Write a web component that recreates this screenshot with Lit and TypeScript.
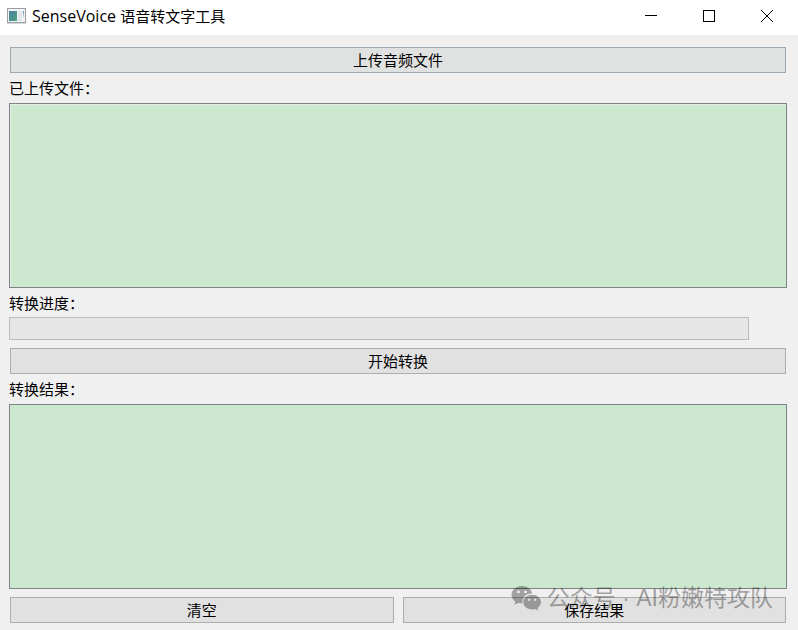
import { LitElement, html, css } from "lit";
import { customElement, property } from "lit/decorators.js";

@customElement("title-bar")
class TitleBar extends LitElement {
  @property() product = "";
  @property() caption = "";

  static styles = css`
    :host {
      display: flex;
      align-items: center;
      height: 35px;
      padding-left: 7px;
      background: #fff;
      color: #000;
    }
    .app-icon {
      flex: none;
      width: 19px;
      height: 16px;
      margin-bottom: 3px;
    }
    .heading {
      flex: 1;
      margin: 0 0 4px 6px;
      font: 400 16px/20px "Open Sans", "Noto Sans CJK SC", sans-serif;
      white-space: nowrap;
    }
    .caption {
      font-size: 15px;
    }
    .controls {
      display: flex;
      align-self: flex-start;
      margin-right: 2px;
    }
    .control {
      width: 58px;
      height: 32px;
      padding: 0;
      border: 0;
      background: none;
      display: grid;
      place-items: center;
    }
    .control:hover {
      background: #e5e5e5;
    }
    .glyph {
      width: 12px;
      height: 12px;
      overflow: visible;
      fill: none;
      stroke: #000;
    }
  `;

  render() {
    return html`
      <svg class="app-icon" viewBox="0 0 19 16" aria-hidden="true">
        <defs>
          <linearGradient id="pane" x1="0" y1="0" x2="1" y2="1">
            <stop offset="0" stop-color="#4a7fa8" />
            <stop offset="1" stop-color="#4fa57c" />
          </linearGradient>
          <linearGradient id="side" x1="0" y1="0" x2="0" y2="1">
            <stop offset="0" stop-color="#4a8fb0" />
            <stop offset="1" stop-color="#dfe8e6" />
          </linearGradient>
        </defs>
        <rect x=".5" y=".5" width="18" height="14" fill="#f1f3f4" stroke="#9a9fa6" />
        <path d="M0 15.5h19" stroke="#d5d7da" />
        <rect x="2" y="3" width="8" height="10" fill="url(#pane)" />
        <rect x="11" y="3" width="4" height="10" fill="#e3e7ea" />
        <rect x="16" y="3" width="1" height="7" fill="url(#side)" />
      </svg>
      <div class="heading">${this.product} <span class="caption">${this.caption}</span></div>
      <div class="controls">
        <button class="control" aria-label="最小化">
          <svg class="glyph" viewBox="0 0 12 12"><path d="M0 5.5h12" /></svg>
        </button>
        <button class="control" aria-label="最大化">
          <svg class="glyph" viewBox="0 0 12 12"><rect x=".5" y=".5" width="11" height="11" /></svg>
        </button>
        <button class="control" aria-label="关闭">
          <svg class="glyph" viewBox="0 0 12 12"><path d="M0 0l12 12M12 0l-12 12" /></svg>
        </button>
      </div>
    `;
  }
}

@customElement("account-mark")
class AccountMark extends LitElement {
  static styles = css`
    :host {
      display: flex;
      align-items: center;
      gap: 5px;
      opacity: 0.32;
      color: #000;
      font: 400 23px/32px "Liberation Sans", "Noto Sans CJK SC", sans-serif;
      white-space: nowrap;
      pointer-events: none;
    }
    .logo {
      width: 31px;
      height: 26px;
    }
  `;

  render() {
    return html`
      <svg class="logo" viewBox="0 0 31 26" aria-hidden="true">
        <path
          fill="currentColor"
          fill-rule="evenodd"
          d="M11 1C5 1 .5 4.800.5 9.700c0 2.800 1.500 5.200 3.900 6.800L3.400 19.700l3.800-2c1.300.4 2.500.6 4.200.6C10.600 12.500 15 8.500 21.200 8.500 20.500 4 16.200 1 11 1zM7.500 5.500a1.400 1.400 0 1 1 0 2.800 1.400 1.400 0 0 1 0-2.800zm7 0a1.400 1.400 0 1 1 0 2.800 1.400 1.400 0 0 1 0-2.800z"
        />
        <path
          fill="currentColor"
          fill-rule="evenodd"
          d="M21.200 9.700c-5 0-9 3.300-9 7.400s4 7.400 9 7.400c1.100 0 2.100-.1 3.100-.4l3 1.700-.8-2.900c2-1.400 3.500-3.500 3.500-5.800 0-4.100-4-7.400-8.800-7.400zm-3 3.900a1.200 1.200 0 1 1 0 2.400 1.200 1.200 0 0 1 0-2.400zm6 0a1.200 1.200 0 1 1 0 2.400 1.200 1.200 0 0 1 0-2.400z"
        />
      </svg>
      <span>公众号 · AI粉嫩特攻队</span>
    `;
  }
}

@customElement("app-root")
class AppRoot extends LitElement {
  static styles = css`
    :host {
      position: relative;
      display: flex;
      flex-direction: column;
      min-height: 100vh;
      background: #f0f0f0;
      color: #000;
      font: 400 15px/20px "Noto Sans CJK SC", sans-serif;
    }
    .panel {
      flex: 1;
      display: flex;
      flex-direction: column;
      padding: 12px 11px 7px 9px;
    }
    .button {
      flex: 1;
      height: 26px;
      padding: 0;
      border: 1px solid #adadad;
      border-radius: 0;
      background: #e1e1e1;
      color: #000;
      font: inherit;
      line-height: 22px;
    }
    .button.focused {
      border-color: #9fa9b4;
      background: #e0e2e1;
    }
    .row {
      display: flex;
      gap: 9px;
      margin: 0 1px;
    }
    .label {
      line-height: 30px;
    }
    .label.compact {
      line-height: 29px;
    }
    .box {
      flex: 1;
      min-height: 60px;
      box-sizing: border-box;
      margin: 0;
      padding: 4px;
      border: 1px solid #7f8385;
      border-radius: 0;
      outline: 0;
      resize: none;
      background: #cce8cf;
      color: #000;
      font: inherit;
    }
    .box.files {
      box-shadow: inset 1px 1px #e6ece8;
    }
    .progress {
      appearance: none;
      display: block;
      box-sizing: border-box;
      width: calc(100% - 38px);
      height: 23px;
      margin-bottom: 8px;
      border: 1px solid #bcbcbc;
      background: #e6e6e6;
    }
    .progress::-webkit-progress-bar {
      background: #e6e6e6;
    }
    .progress::-webkit-progress-value {
      background: #06b025;
    }
    .actions {
      margin-top: 8px;
    }
    .mark {
      position: absolute;
      right: 25px;
      bottom: 16px;
    }
  `;

  render() {
    return html`
      <title-bar product="SenseVoice" caption="语音转文字工具"></title-bar>
      <main class="panel">
        <div class="row"><button class="button focused">上传音频文件</button></div>
        <label class="label" for="files">已上传文件${"\uff1a"}</label>
        <textarea class="box files" id="files" readonly></textarea>
        <label class="label compact" for="progress">转换进度${"\uff1a"}</label>
        <progress class="progress" id="progress" value="0" max="100"></progress>
        <div class="row"><button class="button">开始转换</button></div>
        <label class="label" for="result">转换结果${"\uff1a"}</label>
        <textarea class="box" id="result"></textarea>
        <div class="row actions">
          <button class="button">清空</button>
          <button class="button">保存结果</button>
        </div>
      </main>
      <account-mark class="mark"></account-mark>
    `;
  }
}
